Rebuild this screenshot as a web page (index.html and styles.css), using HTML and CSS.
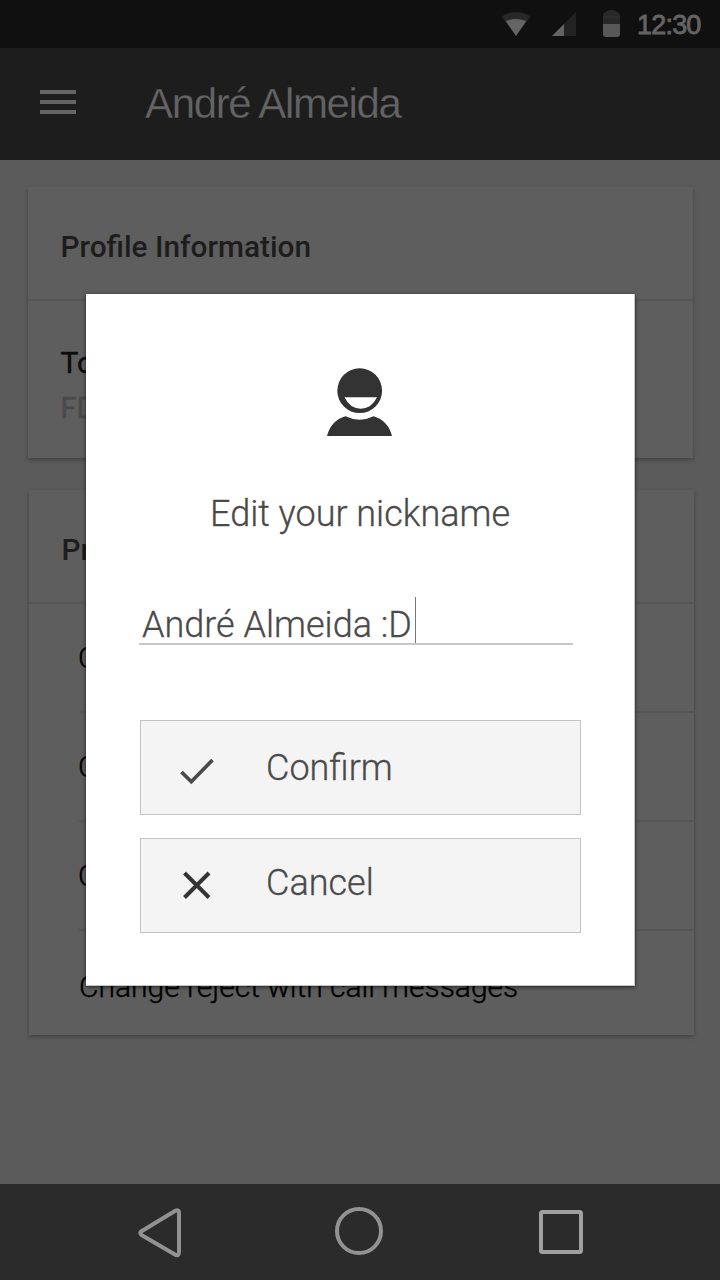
FILE: index.html
```html
<!DOCTYPE html>
<html lang="en">
<head>
<meta charset="utf-8">
<title>André Almeida</title>
<link rel="stylesheet" href="styles.css">
</head>
<body>
<div class="screen">
  <div class="statusbar">
    <svg class="status-icons" width="144" height="48" viewBox="0 0 144 48">
      <path d="M1.500 16.500Q16 7.500 30.500 16.500L16 36Z" fill="#282828"/>
      <path d="M5.800 21Q16 17 26.200 21L16 36Z" fill="#646464"/>
      <path d="M76 12V36H52Z" fill="#232323"/>
      <path d="M64 24V36H52Z" fill="#646464"/>
      <path d="M103 24V15.500Q103 12.500 106 12Q107 10 111.500 10Q116 10 117 12Q120 12.500 120 15.500V24Z" fill="#282828"/>
      <path d="M103 24H120V34Q120 37 117 37H106Q103 37 103 34Z" fill="#585858"/>
      <path d="M103 17H120" stroke="#303030"/>
    </svg>
    <span class="clock">12:30</span>
  </div>
  <header class="appbar">
    <div class="menu"><i></i><i></i><i></i></div>
    <h1 class="name">André Almeida</h1>
  </header>
  <main class="content">
    <section class="card">
      <h2 class="card-title">Profile Information</h2>
      <div class="info">
        <div class="info-main">To</div>
        <div class="info-sub">FD</div>
      </div>
    </section>
    <section class="card card-prefs">
      <h2 class="card-title">Pr</h2>
      <div class="row">C</div>
      <div class="row">C</div>
      <div class="row">C</div>
      <div class="row row-last">Change reject with call messages</div>
    </section>
  </main>
  <nav class="navbar">
    <svg width="720" height="96" viewBox="0 0 720 96" fill="none" stroke="#929292" stroke-width="4">
      <path d="M141.500 47.200L174.500 27.200Q179 24.700 179 29V67.500Q179 73 174.500 70.300L141.500 51Q139 49 141.500 47.200Z" stroke-linejoin="round"/>
      <circle cx="359" cy="47" r="22"/>
      <rect x="541" y="28" width="40" height="40" rx="1.500" stroke="#a0a0a0"/>
    </svg>
  </nav>
  <div class="dialog">
    <svg class="avatar" width="66" height="68" viewBox="0 0 66 68">
      <circle cx="32.700" cy="22.700" r="22.400" fill="#333"/>
      <path d="M17.500 29.300H50Q44.500 40.700 33.700 40.700Q23 40.700 17.500 29.300Z" fill="#fff"/>
      <path d="M0 68Q4 52.500 18.500 48.300Q32.700 55.200 46.500 48.300Q61 52.500 65 68Z" fill="#333"/>
    </svg>
    <div class="dialog-title">Edit your nickname</div>
    <div class="field"><span class="value">André Almeida :D</span><span class="caret"></span></div>
    <div class="button">
      <svg class="button-icon" width="34" height="28" viewBox="0 0 34 28"><path d="M1.500 14L11.300 23.700L32.500 2" fill="none" stroke="#4a4a4a" stroke-width="3.700"/></svg>
      <span>Confirm</span>
    </div>
    <div class="button button-cancel">
      <svg class="button-icon" width="34" height="28" viewBox="0 0 34 28"><path d="M4.500 2L29 26.500M29 2L4.500 26.500" fill="none" stroke="#333" stroke-width="3.900"/></svg>
      <span>Cancel</span>
    </div>
  </div>
</div>
</body>
</html>
```

FILE: styles.css
```css
* { box-sizing: border-box; }
body { margin: 0; font-family: Roboto, sans-serif; }
h1, h2 { margin: 0; font-weight: 400; }
svg { display: block; flex: none; }
.screen {
  position: relative;
  width: 720px;
  height: 1280px;
  overflow: hidden;
  display: flex;
  flex-direction: column;
  background: #5b5b5b;
}
.statusbar {
  height: 48px;
  display: flex;
  padding-left: 500px;
  background: #101010;
}
.clock {
  margin-left: -7px;
  font: 400 27px/50px "Liberation Sans", sans-serif;
  letter-spacing: -0.8px;
  color: #646464;
  -webkit-text-stroke: 0.8px #646464;
}
.appbar {
  height: 112px;
  display: flex;
  align-items: center;
  padding: 0 40px;
  background: #1d1d1d;
}
.menu {
  width: 36px;
  display: grid;
  gap: 6px;
  margin: -4px 69px 0 0;
}
.menu i { height: 4px; background: #646464; }
.name {
  font: 400 42px/48px "Liberation Sans", sans-serif;
  letter-spacing: -1.35px;
  color: #646464;
  -webkit-text-stroke: 0.3px #1d1d1d;
}
.content { flex: 1; padding: 27px 28px 0; }
.card {
  width: 664.5px;
  height: 270.5px;
  background: #5e5e5e;
  box-shadow: 0 2px 4px rgba(0, 0, 0, 0.28);
}
.card-prefs { height: 545px; margin: 32.5px 0 0 1px; }
.card-title {
  height: 114px;
  padding: 40px 32.5px 0;
  border-bottom: 2px solid #565656;
  font-weight: 500;
  font-size: 29.8px;
  line-height: 40px;
  color: #1d1d1d;
}
.info { padding: 42px 32.5px 0; }
.info-main {
  font-size: 30px;
  line-height: 40px;
  color: #0c0c0c;
  -webkit-text-stroke: 0.4px #0c0c0c;
}
.info-sub {
  margin-top: 5px;
  font-size: 29px;
  line-height: 40px;
  color: #4b4949;
  -webkit-text-stroke: 0.4px #4b4949;
}
.row {
  height: 109px;
  margin-left: 50px;
  padding-top: 34px;
  border-bottom: 2px solid #565656;
  font-size: 30px;
  font-weight: 300;
  line-height: 40px;
  color: #000;
  -webkit-text-stroke: 0.4px #000;
}
.row:not(.row-last) { text-indent: -1px; }
.row-last { height: 104px; padding-top: 36px; border: 0; }
.navbar { height: 96px; background: #2b2b2b; }
.dialog {
  position: absolute;
  left: 86px;
  top: 294px;
  width: 549px;
  height: 692px;
  padding: 74px 54px 0;
  border: solid #c4c6c6;
  border-width: 0 1px 1px 0;
  background: #fff;
  box-shadow: 0 1px 4px rgba(0, 0, 0, 0.65);
  color: #4a4a4a;
  font-size: 36px;
  font-weight: 300;
  line-height: 50px;
  -webkit-text-stroke: 0.3px #4a4a4a;
}
.avatar { margin-left: 187px; }
.dialog-title { height: 48px; margin: 53px 0 0 70px; white-space: nowrap; }
.field {
  width: 434px;
  height: 48px;
  margin: 60px 0 75px -1px;
  padding-left: 3px;
  border-bottom: 2px solid #c7c7c7;
  display: flex;
}
.value { width: 273px; line-height: 56px; white-space: nowrap; }
.caret { width: 1px; background: #777; }
.button {
  width: 441px;
  height: 95px;
  margin-bottom: 23px;
  padding: 22px 0 0 38px;
  display: flex;
  border: 1px solid #c4c4c4;
  background: #f4f4f4;
}
.button-icon { margin: 15px 52px 0 1px; }
.button-cancel { padding-top: 19px; }
.button-cancel .button-icon { margin-top: 13px; }
```
